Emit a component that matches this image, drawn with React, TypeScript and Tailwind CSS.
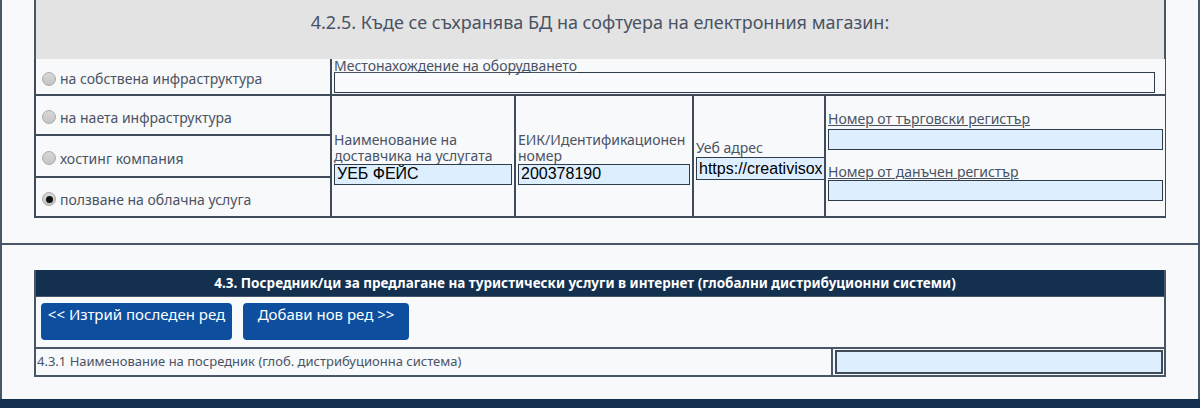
import type { ReactNode } from "react"

const font = { fontFamily: '"Noto Sans", "Open Sans", sans-serif' }

function Radio({ checked }: { checked?: boolean }) {
  return (
    <span className="w-[14px] h-[14px] rounded-full border border-[#a9a9a9] bg-gradient-to-b from-[#d8d8d8] to-[#c4c4c4] flex items-center justify-center shrink-0 mr-[4px]">
      {checked && <span className="w-[7px] h-[7px] rounded-full bg-[#111]" />}
    </span>
  )
}

function Field({ value = "", className = "" }: { value?: string; className?: string }) {
  return (
    <input
      readOnly
      value={value}
      className={`block w-full h-[21px] border border-[#2f3c4c] px-[2px] text-[16px] leading-[19px] text-black outline-none ${className}`}
      style={{ fontFamily: '"Liberation Sans", Arial, sans-serif' }}
    />
  )
}

function Label({ children, underline }: { children: ReactNode; underline?: boolean }) {
  return (
    <div className={`text-[14px] leading-[16px] text-[#4a5363] ${underline ? "underline decoration-1 underline-offset-[1px]" : ""}`}>
      {children}
    </div>
  )
}

const options = [
  { label: "на собствена инфраструктура" },
  { label: "на наета инфраструктура" },
  { label: "хостинг компания" },
  { label: "ползване на облачна услуга", checked: true },
]

export default function App() {
  return (
    <div lang="bg" className="w-[1200px] h-[408px] overflow-hidden bg-[#f8f9fb] flex flex-col" style={font}>
      <div className="h-[245px] shrink-0 border-x-2 border-b-2 border-[#49566a] px-[32px]">
        <div className="h-[59px] bg-[#e3e3e3] border-x-2 border-[#49566a] flex justify-center pt-[9px] text-[18px] text-[#4a5363]">
          4.2.5. Къде се съхранява БД на софтуера на електронния магазин:
        </div>
        <div className="grid grid-cols-[294px_182px_176px_130px_339px] grid-rows-[35px_38px_40px_38px] gap-[2px] bg-[#3f4b5b] p-[2px] pt-0 text-[#4a5363]">
          {options.map((o, i) => (
            <div
              key={o.label}
              className="bg-[#f8f9fb] flex items-center pl-[6px] pt-[4px] text-[14px]"
              style={{ gridColumn: 1, gridRow: i + 1 }}
            >
              <Radio checked={o.checked} />
              {o.label}
            </div>
          ))}
          <div className="col-start-2 col-span-4 row-start-1 bg-[#f8f9fb] pl-[2px] pr-[10px]">
            <div className="text-[14px] leading-[12px] pt-[1px] text-[#4a5363] underline decoration-1 underline-offset-[1px]">
              Местонахождение на оборудването
            </div>
            <Field className="mt-[0px] bg-[#fafbfd]" />
          </div>
          <div className="col-start-2 row-start-2 row-span-3 bg-[#f8f9fb] flex flex-col justify-center px-[2px] pt-[4px]">
            <Label>Наименование на доставчика на услугата</Label>
            <Field value="УЕБ ФЕЙС" className="mt-[0px] bg-[#ddeeff]" />
          </div>
          <div className="col-start-3 row-start-2 row-span-3 bg-[#f8f9fb] flex flex-col justify-center px-[2px] pt-[4px]">
            <Label>ЕИК/Идентификационен номер</Label>
            <Field value="200378190" className="mt-[0px] bg-[#ddeeff]" />
          </div>
          <div className="col-start-4 row-start-2 row-span-3 bg-[#f8f9fb] flex flex-col justify-center pl-[2px] pt-[8px]">
            <Label>Уеб адрес</Label>
            <Field value="https://creativisoxpress.com" className="mt-[1px] border-r-0 h-[23px] bg-[#ddeeff]" />
          </div>
          <div className="col-start-5 row-start-2 row-span-3 bg-[#f8f9fb] flex flex-col justify-center px-[2px]">
            <Label underline>Номер от търговски регистър</Label>
            <Field className="mt-[2px] bg-[#ddeeff]" />
            <div className="h-[14px]" />
            <Label underline>Номер от данъчен регистър</Label>
            <Field className="mt-[0px] bg-[#ddeeff]" />
          </div>
        </div>
      </div>

      <div className="h-[154px] shrink-0 border-x-2 border-[#49566a] px-[32px] pt-[25px]">
        <div className="border-2 border-t-0 border-[#49566a]">
          <div className="h-[26px] bg-[#13304f] flex justify-center items-center text-white font-bold text-[13.5px] pr-[30px]">
            4.3. Посредник/ци за предлагане на туристически услуги в интернет (глобални дистрибуционни системи)
          </div>
          <div className="h-[51px] border-t border-[#49566a] flex gap-[11px] px-[5px] pt-[6px]">
            <button className="w-[191px] h-[37px] rounded-[4px] bg-[#0d4f9e] text-white text-[15px] leading-[20px] flex justify-center pt-[1px]">
              &lt;&lt; Изтрий последен ред
            </button>
            <button className="w-[166px] h-[37px] rounded-[4px] bg-[#0d4f9e] text-white text-[15px] leading-[20px] flex justify-center pt-[1px]">
              Добави нов ред &gt;&gt;
            </button>
          </div>
          <div className="h-[28px] border-t-2 border-[#49566a] flex">
            <div className="w-[796px] border-r border-[#49566a] flex items-center pl-[1px] text-[13px] text-[#4a5363]">
              4.3.1 Наименование на посредник (глоб. дистрибуционна система)
            </div>
            <div className="flex-1 border-l border-[#49566a] p-[1px] pl-[2px]">
              <div className="h-full border-2 border-[#3f4b5b] bg-[#ddeeff]" />
            </div>
          </div>
        </div>
      </div>

      <div className="flex-1 bg-[#13304f]" />
    </div>
  )
}
